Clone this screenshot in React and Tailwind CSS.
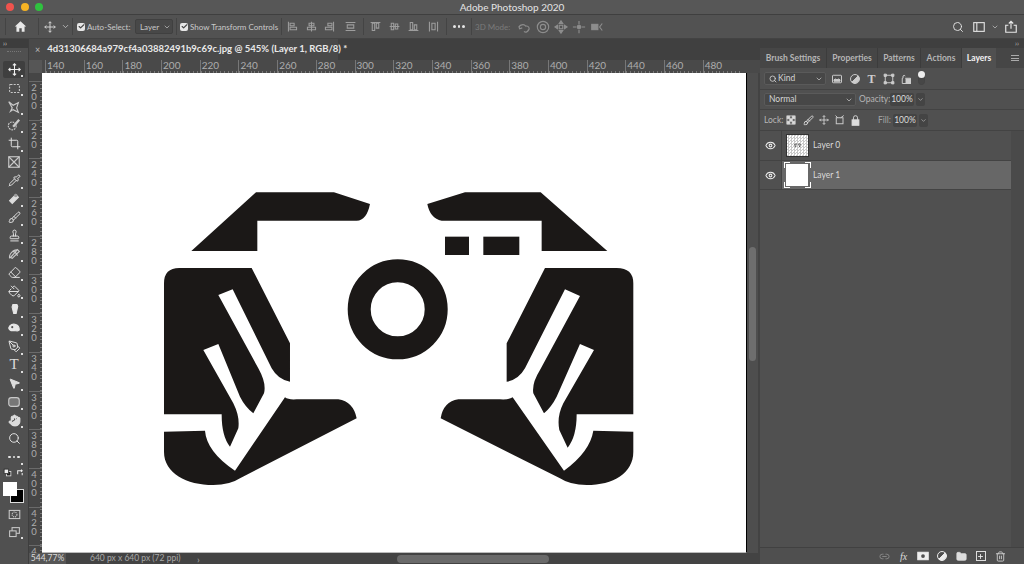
import React from "react";
import { Check, ChevronDown, Search, Crop, Pipette, Brush, Stamp, Eraser, PaintBucket, PenTool, MousePointer2, Hand, Trash2, Folder, Plus, Eye, Link2 } from "lucide-react";

const font = { fontFamily: 'Lato,"Liberation Sans",sans-serif' };

function S({ children, w = 16, c = "text-[#d4d4d4]", sw = 1.3 }) {
  return (
    <svg viewBox="0 0 16 16" width={w} height={w} fill="none" stroke="currentColor" strokeWidth={sw} className={c}>
      {children}
    </svg>
  );
}

const MoveGlyph = ({ w = 14, c }) => (
  <S w={w} c={c}>
    <path d="M8 1v14M1 8h14M6 3l2-2 2 2M6 13l2 2 2-2M3 6 1 8l2 2M13 6l2 2-2 2" />
  </S>
);

function Sep({ ml = 0, mr = 0 }) {
  return <div className="w-px h-[17px] bg-[#444] shrink-0" style={{ marginLeft: ml, marginRight: mr }} />;
}

function Box({ w, children, className = "" }) {
  return <div className={"flex items-center justify-center shrink-0 " + className} style={{ width: w }}>{children}</div>;
}

function CheckB() {
  return (
    <div className="w-[8px] h-[8px] rounded-[2px] bg-[#e6e6e6] flex items-center justify-center shrink-0">
      <Check size={7} strokeWidth={4} className="text-[#444]" />
    </div>
  );
}

function Align({ v }) {
  const paths = {
    l: "M3 2v12M5 4h5v3H5zM5 9h8v3H5z",
    c: "M8 2v12M5 4h6v3H5zM3 9h10v3H3z",
    r: "M13 2v12M6 4h5v3H6zM3 9h8v3H3z",
    h: "M2 3h12M2 13h12M4 6h8v4H4z",
    t: "M2 3h12M4 4h3v9H4zM9 4h3v6H9z",
    m: "M2 8h12M4 4h3v8H4zM9 5h3v6H9z",
    b: "M2 13h12M4 3h3v9H4zM9 6h3v6H9z",
    d: "M3 2v12M13 2v12M6 4h4v8H6z",
  };
  return <S w={13} c="text-[#9d9d9d]"><path d={paths[v]} /></S>;
}

function TitleBar() {
  return (
    <div className="relative h-[15px] bg-[#575757] border-b border-[#3f3f3f] flex items-center justify-center shrink-0">
      <div className="absolute left-[6px] top-[3px] flex gap-[6.5px]">
        <div className="w-[8px] h-[8px] rounded-full bg-[#f0534d]" />
        <div className="w-[8px] h-[8px] rounded-full bg-[#f5b324]" />
        <div className="w-[8px] h-[8px] rounded-full bg-[#2fc23f]" />
      </div>
      <span className="text-[10px] text-[#e4e4e4] leading-none">Adobe Photoshop 2020</span>
    </div>
  );
}

function OptionsBar() {
  return (
    <div className="h-[24px] bg-[#525252] border-b border-[#434343] flex items-center shrink-0 text-[8px] text-[#c9c9c9]">
      <Box w={5} />
      <Sep />
      <Box w={28}>
        <svg viewBox="0 0 16 16" width={13} height={13} fill="#e8e8e8"><path d="M8 1.500 1 8h2v6.500h3.500V10h3v4.500H13V8h2z" /></svg>
      </Box>
      <Box w={4} />
      <Sep />
      <Box w={19} className="ml-[1px]"><MoveGlyph w={12} /></Box>
      <Box w={12}><ChevronDown size={9} className="text-[#ccc]" /></Box>
      <Sep ml={1} />
      <div className="ml-[4px] flex items-center gap-[2px] w-[58px] shrink-0"><CheckB /><span className="whitespace-nowrap">Auto-Select:</span></div>
      <div className="w-[38px] h-[15px] bg-[#484848] border border-[#404040] rounded-[2px] flex items-center justify-between pl-[4px] pr-[1px] shrink-0">
        <span>Layer</span><ChevronDown size={8} />
      </div>
      <Sep ml={3} />
      <div className="ml-[3px] flex items-center gap-[2px] w-[100px] shrink-0"><CheckB /><span className="whitespace-nowrap">Show Transform Controls</span></div>
      <Box w={1} />
      <Sep />
      <Box w={19} className="ml-[1px]"><Align v="l" /></Box>
      <Box w={18}><Align v="c" /></Box>
      <Box w={19}><Align v="r" /></Box>
      <Box w={22}><Align v="h" /></Box>
      <Sep ml={2} />
      <Box w={19} className="ml-[2px]"><Align v="t" /></Box>
      <Box w={18}><Align v="m" /></Box>
      <Box w={20}><Align v="b" /></Box>
      <Box w={21}><Align v="d" /></Box>
      <Sep ml={2} />
      <Box w={24} className="text-[#e6e6e6]">
        <div className="flex gap-[2px]"><i className="w-[2.5px] h-[2.5px] rounded-full bg-current" /><i className="w-[2.5px] h-[2.5px] rounded-full bg-current" /><i className="w-[2.5px] h-[2.5px] rounded-full bg-current" /></div>
      </Box>
      <Sep />
      <span className="ml-[3px] w-[40px] text-[#7a7a7a] whitespace-nowrap shrink-0">3D Mode:</span>
      <Box w={18}><S w={14} c="text-[#8d8d8d]"><path d="M3 10a4 3 0 0 1 7-3 3 3 0 0 1 3 5M2 7l1 3 3-1M8 13a3 3 0 0 0 5-2" /></S></Box>
      <Box w={19}><S w={14} c="text-[#8d8d8d]"><circle cx="8" cy="8" r="6.500" /><circle cx="8" cy="8" r="3" /></S></Box>
      <Box w={18}><S w={14} c="text-[#8d8d8d]"><path d="M8 1 6 4h4zM8 15l-2-3h4zM1 8l3-2v4zM15 8l-3-2v4z" fill="currentColor" /><rect x="6" y="6" width="4" height="4" /></S></Box>
      <Box w={18}><S w={14} c="text-[#8d8d8d]"><circle cx="8" cy="8" r="2" fill="currentColor" /><path d="M8 1v4M8 11v4M1 8h4M11 8h4" /></S></Box>
      <Box w={18}><S w={14} c="text-[#8d8d8d]"><rect x="2" y="5" width="7" height="6" fill="currentColor" /><path d="m14 4-3 4 3 4" /></S></Box>
      <div className="flex-1" />
      <Box w={21}><Search size={12} strokeWidth={1.8} className="text-[#e6e6e6]" /></Box>
      <Box w={21}><S w={14} c="text-[#e0e0e0]"><rect x="2" y="3" width="12" height="10" /><path d="M5.500 3v10" /></S></Box>
      <Box w={12}><ChevronDown size={8} className="text-[#ccc]" /></Box>
      <Box w={20}><S w={14} c="text-[#e8e8e8]"><path d="M8 10V1.500M5.500 4 8 1.500 10.500 4M5 6H2v8h12V6h-3" /></S></Box>
      <Box w={3} />
    </div>
  );
}

function Corner() {
  return <i className="absolute right-[2px] bottom-[1px] w-[2px] h-[2px] bg-[#ddd]" />;
}

function Tool({ children, corner = true, h = 18.45, active }) {
  return (
    <div className={"relative flex items-center justify-center shrink-0 w-[22px] mx-auto " + (active ? "bg-[#3f3f3f] rounded-[2px]" : "")} style={{ height: h }}>
      {children}
      {corner && <Corner />}
    </div>
  );
}

function Toolbar() {
  const ic = { size: 13, className: "text-[#e2e2e2]", strokeWidth: 1.8 };
  return (
    <div className="w-[29px] bg-[#505050] border-r border-[#3e3e3e] flex flex-col shrink-0 self-stretch">
      <div className="h-[9px] bg-[#3d3d3d] text-[#ccc] text-[7px] leading-[8px] pl-[3px] shrink-0">››</div>
      <div className="h-[7px] flex justify-center items-center shrink-0"><div className="w-[14px] border-t border-dotted border-[#777]" /></div>
      <div className="h-[6px] shrink-0" />
      <Tool active h={17}><MoveGlyph w={13} c="text-[#f0f0f0]" /></Tool>
      <div className="h-[1px] shrink-0" />
      <Tool><S w={13} c="text-[#c9c9c9]"><rect x="2" y="3" width="12" height="10" rx="1" strokeDasharray="2.500 1.500" /></S></Tool>
      <Tool><S w={14} c="text-[#c9c9c9]"><path d="m2 2 5 4 6-3-2 6 2 5-6-3-3 2 2-4z" /></S></Tool>
      <Tool><S w={14} c="text-[#c9c9c9]"><circle cx="6" cy="9" r="4.500" strokeDasharray="2 1" /><path d="m7 9 6-7 1 1-6 7z" fill="#e6e6e6" /></S></Tool>
      <Tool><Crop {...ic} /></Tool>
      <Tool corner={false}><S w={14} c="text-[#c9c9c9]"><rect x="2" y="2" width="12" height="12" /><path d="m2 2 12 12M14 2 2 14" /></S></Tool>
      <Tool><Pipette {...ic} /></Tool>
      <Tool><S w={14} c="text-[#dcdcdc]"><path d="m3 10 7-7 3 3-7 7z" fill="#ddd" /><circle cx="10" cy="4" r="2" fill="#999" stroke="none" /></S></Tool>
      <Tool><Brush {...ic} /></Tool>
      <Tool><Stamp {...ic} /></Tool>
      <Tool><S w={14} c="text-[#c9c9c9]"><path d="M3 13C2 8 7 3 12 3M6 5c3 0 5 2 6 5M4 12l8-9 2 2-8 8z" /></S></Tool>
      <Tool><Eraser {...ic} /></Tool>
      <Tool><PaintBucket {...ic} /></Tool>
      <Tool><S w={13} c="text-[#e6e6e6]"><path d="M6 2h5l1 2-2 9H7L5 5z" fill="currentColor" /></S></Tool>
      <Tool><S w={14} c="text-[#e6e6e6]"><path d="M2 8c1-4 5-5 8-4s4 4 4 6-4 1-6 1-5 1-6-3z" fill="currentColor" /><circle cx="6" cy="7" r="1.200" fill="#505050" stroke="none" /></S></Tool>
      <Tool><PenTool {...ic} /></Tool>
      <Tool><span className="text-[15px] leading-none text-[#dcdcdc]" style={{ fontFamily: '"Liberation Serif",serif' }}>T</span></Tool>
      <Tool><MousePointer2 {...ic} fill="#dcdcdc" /></Tool>
      <Tool><S w={14} c="text-[#c9c9c9]"><rect x="2" y="3" width="12" height="10" rx="3" fill="#777" /></S></Tool>
      <Tool><Hand {...ic} fill="#dcdcdc" /></Tool>
      <Tool corner={false}><Search {...ic} /></Tool>
      <Tool>
        <div className="flex gap-[2px]"><i className="w-[2.5px] h-[2.5px] rounded-full bg-[#e6e6e6]" /><i className="w-[2.5px] h-[2.5px] rounded-full bg-[#e6e6e6]" /><i className="w-[2.5px] h-[2.5px] rounded-full bg-[#e6e6e6]" /></div>
      </Tool>
      <div className="h-[12px] flex items-center justify-between px-[3px] shrink-0 text-[#ddd]">
        <S w={9} c="text-[#eee]"><rect x="6" y="6" width="8" height="8" fill="#222" /><rect x="2" y="2" width="8" height="8" fill="#eee" stroke="#222" /></S>
        <S w={9} c="text-[#eee]"><path d="M3 11V5h8M9 3l2 2-2 2M11 13V9" strokeWidth="1.800" /></S>
      </div>
      <div className="relative h-[26px] shrink-0">
        <div className="absolute left-[10px] top-[11px] w-[14px] h-[14px] bg-black border border-[#ddd]" />
        <div className="absolute left-[3px] top-[4px] w-[14px] h-[14px] bg-white" />
      </div>
      <div className="h-[20px] flex items-center justify-center shrink-0">
        <S w={13} c="text-[#c9c9c9]"><rect x="1.500" y="3" width="13" height="10" /><circle cx="8" cy="8" r="3" strokeDasharray="1.500 1" /></S>
      </div>
      <Tool h={16}><S w={13} c="text-[#c9c9c9]"><rect x="5" y="2" width="9" height="7" /><rect x="2" y="6" width="8" height="7" fill="#505050" /></S></Tool>
    </div>
  );
}

function HRuler() {
  const labels = [140, 160, 180, 200, 220, 240, 260, 280, 300, 320, 340, 360, 380, 400, 420, 440, 460, 480];
  return (
    <div className="h-[13px] bg-[#494949] flex shrink-0 overflow-hidden">
      <div className="w-[13px] bg-[#565656] shrink-0" />
      <div className="w-[3px] shrink-0" />
      {labels.map((l) => (
        <div key={l} className="w-[38.7px] shrink-0 border-l border-[#777] flex flex-col justify-end">
          <span className="text-[10px] leading-[11px] text-[#adadad] pl-[1px]">{l}</span>
          <div className="h-[2px] bg-[repeating-linear-gradient(90deg,#7a7a7a_0_1px,transparent_1px_3.87px)]" />
        </div>
      ))}
    </div>
  );
}

function VRuler() {
  const labels = ["200", "220", "240", "260", "280", "300", "320", "340", "360", "380", "400", "420", "4"];
  return (
    <div className="w-[13px] bg-[#464646] shrink-0 flex flex-col overflow-hidden h-[480px]">
      <div className="h-[8px] shrink-0" />
      {labels.map((l) => (
        <div key={l} className={"shrink-0 border-t border-[#6a6a6a] flex justify-between overflow-hidden " + (l === "4" ? "h-[14px]" : "h-[38.7px]")}>
          <span className="flex flex-col items-center w-[10px] pt-[1px]">
            {l.split("").map((d, i) => (
              <span key={i} className="text-[9.5px] leading-[9px] text-[#adadad]">{d}</span>
            ))}
          </span>
          <div className="w-[2px] bg-[repeating-linear-gradient(0deg,#7a7a7a_0_1px,transparent_1px_3.87px)]" />
        </div>
      ))}
    </div>
  );
}

function Artwork() {
  const left = "translate(150 180) scale(.3333)";
  const right = "translate(400 180) scale(.3333)";
  return (
    <svg viewBox="42 73 704 479" className="w-full h-full block" fill="#1b1817">
      <g transform={left}>
        <path d="M318 37L552 37L660 72Q650 122 620 122L322 122L322 213L124 213Z" />
        <path d="M42 310Q42 264 88 264L305 264L420 490L420 605Q385 600 365 565L248 328L205 345L325 565Q350 610 342 640L310 700Q285 680 270 650L205 492L160 510L250 670Q270 710 265 745L240 800Q215 770 215 703L42 703Z" />
        <path d="M42 755L165 752Q170 815 255 872L405 652Q415 660 440 658L565 658Q610 665 620 715L270 895Q240 915 190 915C110 915 42 880 42 815Z" />
      </g>
      <g transform={right}>
        <path d="M195 37L422 37L622 213L425 213L425 122L125 122Q90 115 82 72Z" />
        <rect x="135" y="170" width="72" height="55" />
        <rect x="250" y="170" width="108" height="55" />
        <path d="M700 310Q700 264 650 264L435 264L320 490L320 605Q355 600 375 565L495 328L540 348L420 570Q395 610 400 640L432 700Q455 680 470 650L540 492L582 510L490 670Q470 710 478 750L503 803Q530 770 530 703L700 703Z" />
        <path d="M700 755L580 752Q570 815 492 872L338 652Q325 660 300 658L175 658Q130 665 122 715L480 895Q510 915 560 915C640 915 700 880 700 815Z" />
      </g>
      <circle cx="397.700" cy="309.300" r="38.500" fill="none" stroke="#1b1817" strokeWidth="23" />
    </svg>
  );
}

function DocArea() {
  return (
    <div className="flex-1 flex flex-col min-w-0 bg-[#484848]">
      <div className="h-[21px] flex shrink-0 bg-[#404040]">
        <div className="w-[309px] bg-[#494949] flex items-center shrink-0 pl-[6px] gap-[7px]">
          <span className="text-[9px] text-[#bbb] leading-none">×</span>
          <span className="text-[9.5px] font-bold text-[#e8e8e8] whitespace-nowrap">4d31306684a979cf4a03882491b9c69c.jpg @ 545% (Layer 1, RGB/8) *</span>
        </div>
      </div>
      <HRuler />
      <div className="flex-1 flex min-h-0">
        <VRuler />
        <div className="flex-1 bg-white border-r border-black min-w-0 border-b border-b-[#bbb]">
          <Artwork />
        </div>
        <div className="w-[13px] bg-[#4e4e4e] border-r-2 border-[#434343] shrink-0 flex flex-col items-center pr-[1px]">
          <div className="h-[174px] shrink-0" />
          <div className="w-[7px] h-[114px] rounded-full bg-[#6e6e6e]" />
        </div>
      </div>
      <div className="h-[11px] bg-[#434343] flex items-center shrink-0 text-[8.5px] text-[#a8a8a8]">
        <div className="w-[37px] h-full bg-[#565656] text-[#dcdcdc] flex items-center justify-center shrink-0">544,77%</div>
        <span className="ml-[24px] w-[107px] whitespace-nowrap shrink-0">640 px x 640 px (72 ppi)</span>
        <span className="text-[10px] leading-none w-[200px] shrink-0">›</span>
        <div className="w-[152px] h-[8px] rounded-full bg-[#6a6a6a] shrink-0" />
      </div>
    </div>
  );
}

function Sel({ w, children }) {
  return (
    <div className="h-[13px] bg-[#474747] border border-[#5a5a5a] rounded-[2px] flex items-center justify-between pl-[4px] pr-[2px] shrink-0 text-[#d4d4d4]" style={{ width: w }}>
      {children}
      <ChevronDown size={8} />
    </div>
  );
}

function Pct() {
  return (
    <div className="flex items-center gap-[2px] shrink-0">
      <div className="w-[24px] h-[13px] bg-[#444] rounded-[2px] flex items-center justify-center text-[#dcdcdc]">100%</div>
      <div className="w-[9px] h-[13px] bg-[#444] rounded-[2px] flex items-center justify-center"><ChevronDown size={7} /></div>
    </div>
  );
}

function LayerRow({ name, active, thumb, h }) {
  return (
    <div className={"flex items-center shrink-0 border-b border-[#434343] " + (active ? "bg-[#676767]" : "bg-[#505050]")} style={{ height: h }}>
      <div className="w-[22px] h-full flex items-center justify-center border-r border-[#434343] shrink-0 bg-[#505050]">
        <Eye size={11} strokeWidth={2.2} className="text-[#eee]" />
      </div>
      <div className="w-[30px] flex justify-center shrink-0">{thumb}</div>
      <span className="text-[8.5px] text-[#dadada] ml-[1px]">{name}</span>
    </div>
  );
}

function Panel() {
  const tabs = [["Brush Settings", 67], ["Properties", 51], ["Patterns", 43], ["Actions", 41]];
  return (
    <div className="w-[264px] shrink-0 bg-[#4e4e4e] flex flex-col text-[8.5px] text-[#c8c8c8]">
      <div className="h-[9px] bg-[#3f3f3f] shrink-0 flex justify-end pr-[5px] text-[7px] leading-[8px] text-[#bbb]">››</div>
      <div className="h-[20px] flex bg-[#3f3f3f] shrink-0 items-stretch">
        {tabs.map(([t, w]) => (
          <div key={t} className="flex items-center justify-center bg-[#464646] border-r border-[#3c3c3c] text-[#b5b5b5] whitespace-nowrap shrink-0 font-bold" style={{ width: w }}>{t}</div>
        ))}
        <div className="w-[34px] bg-[#505050] flex items-center justify-center text-[#f2f2f2] font-bold shrink-0">Layers</div>
        <div className="flex-1 bg-[#464646] flex items-center justify-end pr-[1px]">
          <div className="w-[8px] h-[6px] mr-[4px] border-y border-[#aaa] bg-[linear-gradient(#aaa,#aaa)] bg-[length:100%_1px] bg-center bg-no-repeat" />
        </div>
      </div>
      <div className="h-[22px] flex items-center pl-[4px] border-b border-[#434343] shrink-0 bg-[#505050]">
        <Sel w={62}><span className="flex items-center gap-[1px]"><Search size={8} strokeWidth={2.500} />Kind</span></Sel>
        <Box w={18} className="ml-[2px]"><S w={12} c="text-[#ccc]"><rect x="2" y="3" width="12" height="10" rx="1" /><path d="M4 11h8V9l-2-1-2 1-2-1-2 1z" fill="currentColor" /></S></Box>
        <Box w={17}><S w={12} c="text-[#ccc]"><circle cx="8" cy="8" r="6" /><path d="M8 8 12.200 3.800A6 6 0 0 1 3.800 12.200Z" fill="currentColor" /></S></Box>
        <Box w={17}><span className="text-[12px] leading-none font-bold text-[#ccc]" style={{ fontFamily: '"Liberation Serif",serif' }}>T</span></Box>
        <Box w={17}><S w={12} c="text-[#ccc]"><rect x="3" y="3" width="10" height="10" /><path d="M1.500 1.500h3v3h-3zM11.500 1.500h3v3h-3zM1.500 11.500h3v3h-3zM11.500 11.500h3v3h-3z" fill="currentColor" /></S></Box>
        <Box w={17}><S w={12} c="text-[#ccc]"><path d="M7 7h7v7H3V7h1V4a2 2 0 0 1 3 0" fill="none" /><rect x="8" y="8" width="6" height="6" fill="currentColor" /></S></Box>
        <Box w={15}>
          <div className="w-[7px] h-[13px] rounded-full border border-[#444] bg-[#474747]"><div className="w-[7px] h-[7px] -mt-[2px] -ml-px rounded-full bg-[#eee]" /></div>
        </Box>
      </div>
      <div className="h-[20px] flex items-center pl-[4px] border-b border-[#434343] shrink-0 bg-[#505050]">
        <Sel w={92}><span>Normal</span></Sel>
        <span className="ml-[3px] w-[31px] text-[#b5b5b5] shrink-0">Opacity:</span>
        <Pct />
      </div>
      <div className="h-[21px] flex items-center pl-[4px] border-b border-[#434343] shrink-0 bg-[#505050]">
        <span className="w-[18px] text-[#b5b5b5] shrink-0">Lock:</span>
        <Box w={18}><S w={10} c="text-[#ddd]"><rect x="1.500" y="1.500" width="13" height="13" /><path d="M2 2h4v4H2zM10 2h4v4h-4zM6 6h4v4H6zM2 10h4v4H2zM10 10h4v4h-4z" fill="currentColor" /></S></Box>
        <Box w={17}><Brush size={11} className="text-[#ddd]" /></Box>
        <Box w={14}><MoveGlyph w={10} c="text-[#ddd]" /></Box>
        <Box w={17}><S w={12} c="text-[#ccc]"><rect x="3" y="5" width="9" height="8" /><path d="m9 5 4-3M2 2l3 3" /></S></Box>
        <Box w={15}><S w={11} c="text-[#ddd]"><rect x="3" y="7" width="10" height="8" fill="currentColor" /><path d="M5 7V4a3 3 0 0 1 6 0v3" /></S></Box>
        <div className="w-[14px] shrink-0" />
        <span className="w-[16px] text-[#a5a5a5] pl-[1px] shrink-0">Fill:</span>
        <Pct />
      </div>
      <div className="flex-1 flex min-h-0">
        <div className="w-[251px] flex flex-col shrink-0 bg-[#505050]">
          <LayerRow name="Layer 0" h={30} thumb={
            <div className="w-[23px] h-[23px] bg-[repeating-conic-gradient(#c9c9c9_0_25%,#fff_0_50%)] bg-[length:3px_3px] border border-[#333] flex items-center justify-center">
              <S w={9} c="text-[#333]"><path d="M2 8c0-2 2-3 4-3M14 8c0-2-2-3-4-3M4 11l2-6M12 11l-2-6" /></S>
            </div>} />
          <LayerRow name="Layer 1" active h={29} thumb={
            <div className="relative w-[27px] h-[26px] flex items-center justify-center">
              <div className="w-[22px] h-[22px] bg-white" />
              <i className="absolute left-0 top-0 w-[6px] h-[6px] border-l border-t border-white" />
              <i className="absolute right-0 top-0 w-[6px] h-[6px] border-r border-t border-white" />
              <i className="absolute left-0 bottom-0 w-[6px] h-[6px] border-l border-b border-white" />
              <i className="absolute right-0 bottom-0 w-[6px] h-[6px] border-r border-b border-white" />
            </div>} />
        </div>
        <div className="flex-1 bg-[#4a4a4a]" />
      </div>
      <div className="h-[17px] bg-[#4f4f4f] border-t border-[#414141] shrink-0 flex items-center pl-[114px]">
        <Box w={20}><Link2 size={11} className="text-[#8a8a8a]" /></Box>
        <Box w={19}><span className="italic text-[10px] text-[#ddd]" style={{ fontFamily: '"Liberation Serif",serif' }}>fx</span></Box>
        <Box w={19}><S w={12} c="text-[#eee]"><rect x="1" y="3" width="14" height="10" fill="currentColor" /><circle cx="8" cy="8" r="2.500" fill="#4f4f4f" stroke="none" /></S></Box>
        <Box w={19}><S w={12} c="text-[#eee]"><circle cx="8" cy="8" r="6" /><path d="M8 8 12.200 3.800A6 6 0 0 1 3.800 12.200Z" fill="currentColor" /></S></Box>
        <Box w={20}><Folder size={11} fill="#ddd" className="text-[#ddd]" /></Box>
        <Box w={19}><div className="w-[10px] h-[10px] border border-[#ddd] flex items-center justify-center"><Plus size={7} strokeWidth={3} className="text-[#eee]" /></div></Box>
        <Box w={20}><Trash2 size={11} className="text-[#ccc]" /></Box>
      </div>
    </div>
  );
}

export default function App() {
  return (
    <div className="w-[1024px] h-[564px] overflow-hidden flex flex-col bg-[#404040]" style={font}>
      <TitleBar />
      <OptionsBar />
      <div className="flex-1 flex min-h-0">
        <Toolbar />
        <DocArea />
        <Panel />
      </div>
    </div>
  );
}
